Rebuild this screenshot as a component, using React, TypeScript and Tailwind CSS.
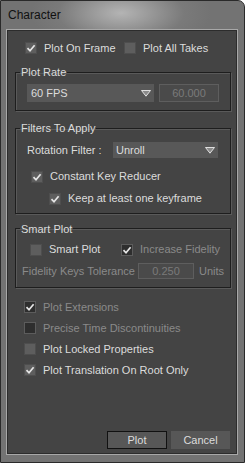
import type { ReactNode } from "react";

const font = { fontFamily: '"Liberation Sans", Arial, sans-serif' };

function Check({ on, dim }: { on?: boolean; dim?: boolean }) {
  return (
    <span
      className={`flex h-[12px] w-[12px] shrink-0 items-center justify-center border ${
        dim ? "border-[#5c5c5c] bg-[#2e2e2e]" : "border-[#4e4e4e] bg-[#5e5e5e]"
      }`}
    >
      {on && (
        <svg width="10" height="10" viewBox="0 0 10 10">
          <path d="M1.5 5.2 L4 7.8 L8.6 2.2" fill="none" stroke="#e6e6e6" strokeWidth="1.7" />
        </svg>
      )}
    </span>
  );
}

function Row({ on, dim, label, className = "" }: { on?: boolean; dim?: boolean; label: string; className?: string }) {
  return (
    <div className={`flex h-[14px] items-center gap-[7px] ${className}`}>
      <Check on={on} dim={dim} />
      <span className={dim ? "text-[#8a8a8a]" : "text-[#dcdcdc]"}>{label}</span>
    </div>
  );
}

function Arrow() {
  return (
    <svg width="10" height="7" viewBox="0 0 10 7">
      <path d="M0.5 0.5 H9.5 L5 6.2 Z" fill="#8a8a8a" stroke="#e0e0e0" strokeWidth="1" />
    </svg>
  );
}

function Group({ title, children, className = "" }: { title: string; children: ReactNode; className?: string }) {
  return (
    <fieldset
      className={`mx-[8px] w-[216px] border border-[#1e1e1e] shadow-[inset_1px_1px_0_#5a5a5a,1px_1px_0_#5a5a5a] ${className}`}
    >
      <legend className="ml-[4px] px-[1px] text-[11px] leading-[12px] text-[#dcdcdc]">{title}</legend>
      {children}
    </fieldset>
  );
}

export default function App() {
  return (
    <div
      style={font}
      className="flex h-[463px] w-[245px] flex-col rounded-tr-[7px] border border-[#2a2a2a] bg-[radial-gradient(ellipse_90px_40px_at_120px_12px,#b4b4b4,#7a7a7a_70%,#737373)] text-[11px]"
    >
      <div className="flex h-[28px] shrink-0 items-center pl-[7px] text-[12px] text-[#111]">Character</div>
      <div className="mb-[7px] ml-[5px] mr-[6px] flex flex-1 flex-col border border-[#a8a8a8] bg-[#444444] shadow-[inset_0_0_0_1px_#2c2c2c]">
        <div className="mt-[11px] flex pl-[18px]">
          <Row on label="Plot On Frame" className="w-[99px]" />
          <Row label="Plot All Takes" />
        </div>

        <Group title="Plot Rate" className="mt-[11px] pb-[8px]">
          <div className="mt-[6px] flex gap-[5px] pl-[11px]">
            <div className="flex h-[18px] w-[127px] items-center justify-between bg-[#585858] pl-[4px] pr-[3px] text-[#dcdcdc]">
              <span>60 FPS</span>
              <Arrow />
            </div>
            <div className="flex h-[18px] w-[60px] items-center justify-center border border-[#5e5e5e] bg-[#4a4a4a] text-[#7a7a7a]">
              60.000
            </div>
          </div>
        </Group>

        <Group title="Filters To Apply" className="mt-[11px] pb-[7px]">
          <div className="mt-[8px] flex items-center pl-[11px]">
            <span className="w-[86px] text-[#dcdcdc]">Rotation Filter :</span>
            <div className="flex h-[16px] w-[105px] items-center justify-between bg-[#585858] pl-[3px] pr-[3px] text-[#dcdcdc]">
              <span>Unroll</span>
              <Arrow />
            </div>
          </div>
          <Row on label="Constant Key Reducer" className="mt-[11px] pl-[15px]" />
          <Row on label="Keep at least one keyframe" className="mt-[8px] pl-[33px]" />
        </Group>

        <Group title="Smart Plot" className="mt-[9px] pb-[8px]">
          <div className="mt-[8px] flex pl-[14px]">
            <Row label="Smart Plot" className="w-[91px]" />
            <Row on dim label="Increase Fidelity" />
          </div>
          <div className="mt-[6px] flex items-center pl-[6px]">
            <span className="w-[116px] text-[#8a8a8a]">Fidelity Keys Tolerance</span>
            <div className="flex h-[16px] w-[56px] items-center justify-center border border-[#5e5e5e] bg-[#4a4a4a] text-[#7a7a7a]">
              0.250
            </div>
            <span className="ml-[5px] text-[#8a8a8a]">Units</span>
          </div>
        </Group>

        <div className="mt-[12px] flex flex-col gap-[7px] pl-[17px]">
          <Row on dim label="Plot Extensions" />
          <Row dim label="Precise Time Discontinuities" />
          <Row label="Plot Locked Properties" />
          <Row on label="Plot Translation On Root Only" />
        </div>

        <div className="flex-1" />
        <div className="mb-[5px] mr-[7px] flex justify-end gap-[4px]">
          <button className="h-[18px] w-[60px] border border-[#111] bg-[#575757] text-[#dcdcdc]">Plot</button>
          <button className="h-[18px] w-[59px] bg-[#575757] text-[#dcdcdc]">Cancel</button>
        </div>
      </div>
    </div>
  );
}
